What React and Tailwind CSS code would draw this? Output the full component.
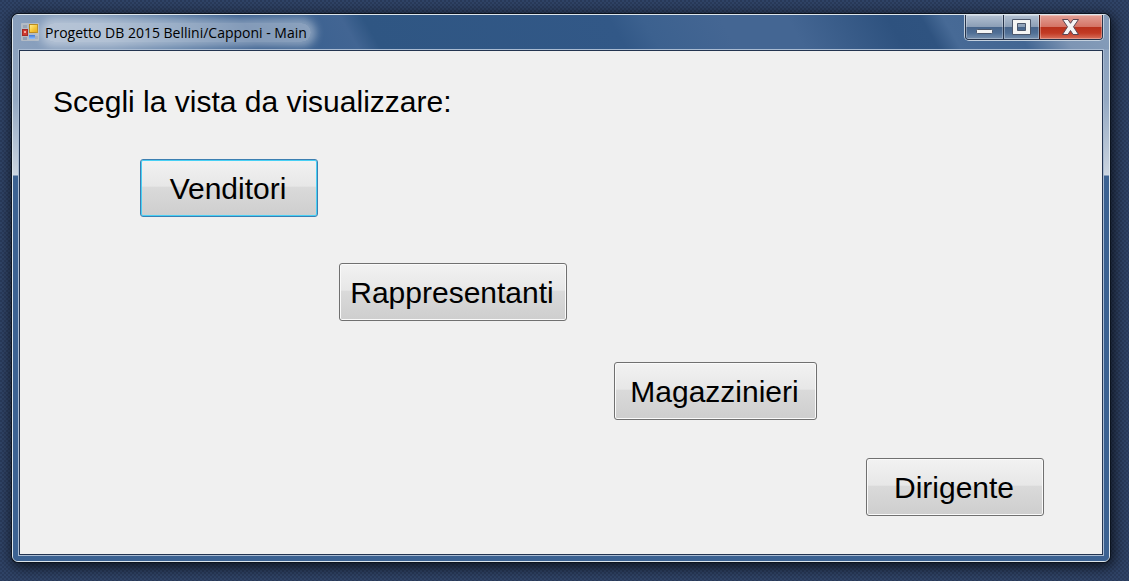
import React from "react";

function FormIcon() {
  return (
    <svg className="size-[18px] shrink-0" viewBox="0 0 18 18" aria-hidden="true">
      <defs>
        <linearGradient id="gold" x1="0" y1="0" x2="1" y2="1">
          <stop offset="0" stopColor="#fff0a0" />
          <stop offset="0.5" stopColor="#f8cb3c" />
          <stop offset="1" stopColor="#e0a010" />
        </linearGradient>
        <linearGradient id="azure" x1="0" y1="0" x2="0" y2="1">
          <stop offset="0" stopColor="#3f78d8" />
          <stop offset="1" stopColor="#8fc0ff" />
        </linearGradient>
      </defs>
      <rect width="18" height="18" rx="1" fill="#b3bbc5" />
      <rect x="2" y="2" width="4" height="3" fill="#9aa5b4" />
      <rect x="2" y="14" width="4" height="3" fill="#8f9db2" />
      <rect x="14" y="13" width="3" height="3" fill="#a3adba" />
      <rect x="8.5" y="1.5" width="8" height="8" fill="url(#gold)" stroke="#b98a1c" />
      <rect x="1.5" y="6.5" width="5" height="6" fill="#cf3a30" stroke="#a32a28" />
      <rect x="3" y="8" width="2" height="2" fill="#f4a79c" />
      <rect x="8" y="12" width="6" height="4" fill="url(#azure)" />
    </svg>
  );
}

function CaptionButtons() {
  const base = "flex h-6 items-center justify-center shadow-[inset_0_0_0_1px_rgba(255,255,255,0.3)]";
  const blue =
    "bg-[linear-gradient(to_bottom,#b3c1d2_0%,#8d9fb7_48%,#47648a_50%,#506f96_75%,#7890ae_100%)]";
  return (
    <div className="flex h-[26px] self-start rounded-b-[5px] border-x border-b border-[#c3d0de]">
      <div className="flex overflow-hidden rounded-b-[4px] border-x border-b border-[#26334a]">
        <button aria-label="Minimize" className={`${base} ${blue} w-[37px]`}>
          <svg width="20" height="18" viewBox="0 0 20 18" aria-hidden="true">
            <rect x="1.5" y="11.5" width="16" height="4" rx="1" fill="#f4f4f4" stroke="#4b566b" />
          </svg>
        </button>
        <button aria-label="Maximize" className={`${base} ${blue} w-9 border-l border-[#26334a]`}>
          <svg width="20" height="18" viewBox="0 0 20 18" aria-hidden="true">
            <path
              d="M.5 1.5H18.5V16.5H.5ZM5.5 5.5V12.5H13.5V5.5Z"
              fill="#f4f4f4"
              fillRule="evenodd"
              stroke="#4b566b"
              strokeLinejoin="round"
            />
          </svg>
        </button>
        <button
          aria-label="Close"
          className={`${base} w-[63px] border-l border-[#4a1712] bg-[linear-gradient(to_bottom,#e3a096_0%,#d57567_48%,#b8301c_50%,#c23a24_75%,#d8705c_100%)]`}
        >
          <svg width="20" height="18" viewBox="0 0 20 18" aria-hidden="true">
            <path
              d="M1.5 1.5H7L9.5 5.3L12 1.5H17.5L12.5 8.8L17.5 16.5H12L9.5 12.5L7 16.5H1.5L6.5 8.8Z"
              fill="#f4f4f4"
              stroke="#5b4552"
              strokeLinejoin="round"
            />
          </svg>
        </button>
      </div>
    </div>
  );
}

function FormButton({ children, focused = false, className }) {
  const edge = focused
    ? "border-[#3c7fb1] shadow-[inset_0_0_0_1px_#48d0f5]"
    : "border-[#707070] shadow-[inset_0_0_0_1px_#fafafa]";
  return (
    <button
      className={`h-[58px] self-start rounded-[3px] border bg-[linear-gradient(to_bottom,#f2f2f2_0%,#e7e7e7_47%,#dadada_48%,#cecece_100%)] pt-[2px] pr-[2px] text-center text-[30px] leading-[34px] ${edge} ${className}`}
    >
      {children}
    </button>
  );
}

export default function App() {
  return (
    <div className="flex min-h-screen bg-[#304467] bg-[radial-gradient(circle_at_1px_1px,#293a5a_1px,transparent_1px),radial-gradient(circle_at_3px_3px,#293a5a_1px,transparent_1px)] bg-[size:4px_4px] pt-[14px] pr-[19px] pb-[19px] pl-3 font-['Liberation_Sans',Arial,sans-serif] text-black">
      <main className="flex flex-1 flex-col overflow-hidden rounded-[6px] border border-[#dce5ec] bg-[#3c6292] shadow-[0_0_0_1px_#0c1420,2px_3px_14px_2px_rgba(0,0,0,0.7)]">
        <header className="flex h-[34px] items-center justify-between bg-[linear-gradient(60deg,#8ba1be_0%,#7f98b8_9%,#5c7da5_15%,#31588a_22%,#3c6291_27%,#426593_31%,#2f5683_33%,#325887_55%,#3c618f_58%,#446693_65%,#446693_71%,#2e527f_80%,#2f5380_83%,#476a96_85%,#436693_91%,#7d95b4_95%,#869dba_100%)] pr-[5px] pl-2">
          <div className="flex items-center gap-[6px]">
            <FormIcon />
            <h1 className="rounded-full bg-white/40 pt-px pr-1 font-['Open_Sans','Segoe_UI',sans-serif] text-[14px] leading-[18px] whitespace-nowrap shadow-[0_0_8px_5px_rgba(255,255,255,0.4)]">
              Progetto DB 2015 Bellini/Capponi - Main
            </h1>
          </div>
          <CaptionButtons />
        </header>
        <div className="flex flex-1 flex-col bg-[linear-gradient(to_bottom,#8ba1be_0,#93a8c2_50px,#c9d3df_124px,#cfd8e3_126px,#3c6292_127px)] px-[5px]">
          <div className="flex flex-1 border border-[#a9bbd2]">
            <section className="flex flex-1 flex-col border border-[#233450] bg-[#f0f0f0] pb-[38px]">
              <h2 className="mt-[34px] ml-[33px] text-[30px] leading-[34px]">
                Scegli la vista da visualizzare:
              </h2>
              <FormButton focused className="mt-10 ml-[120px] w-[178px]">Venditori</FormButton>
              <FormButton className="mt-[46px] ml-[319px] w-[228px]">Rappresentanti</FormButton>
              <FormButton className="mt-[41px] ml-[594px] w-[203px]">Magazzinieri</FormButton>
              <FormButton className="mt-[38px] ml-[846px] w-[178px]">Dirigente</FormButton>
            </section>
          </div>
        </div>
        <div className="h-[5px] bg-[#3c6292]" />
      </main>
    </div>
  );
}
